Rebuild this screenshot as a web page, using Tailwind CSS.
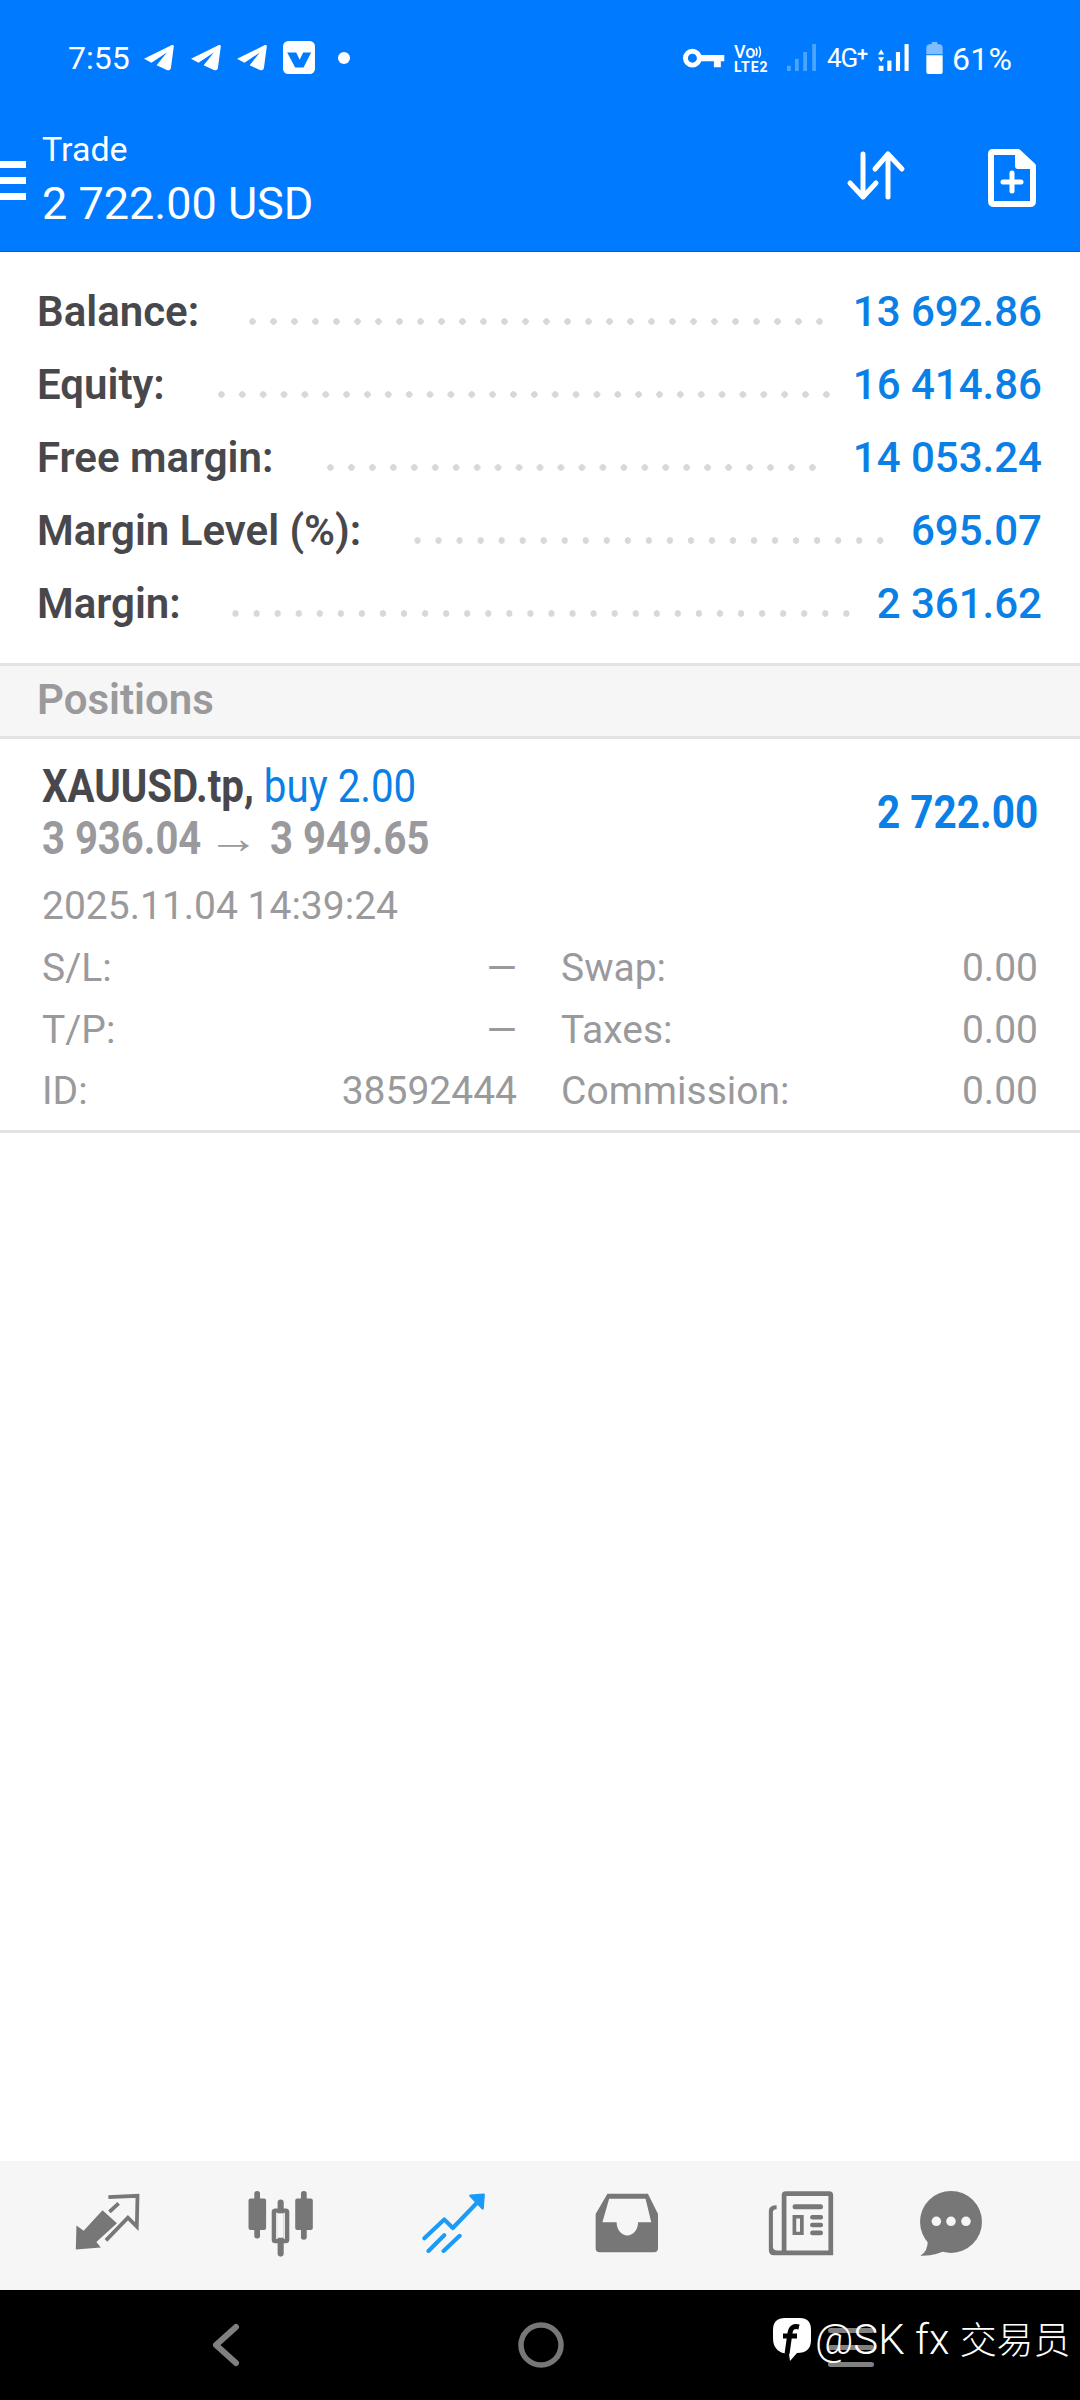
<!DOCTYPE html>
<html lang="en">
<head>
  <meta charset="UTF-8" />
  <title>Trade</title>
  <script src="https://cdn.jsdelivr.net/npm/@tailwindcss/browser@4"></script>
</head>
<body class="bg-white font-['Roboto',sans-serif]">
<div class="relative w-[1080px] h-[2400px] flex flex-col overflow-hidden">

  <!-- header -->
  <header class="h-[252px] shrink-0 bg-[#007aff] border-b border-[#0a5fb8] text-white">
    <!-- status bar -->
    <div class="h-[114px] flex items-center pl-[68px] pt-[1px]">
      <span class="text-[32px] leading-none w-[76px]">7:55</span>
      <svg class="w-[30px] h-[28px] mr-[17px]" viewBox="418 135 88 82" fill="#fff"><path d="M418 178 L500 138 Q507 136 505 145 L497 205 Q495 215 485 211 L455 197 L485 160 L440 190 Z"/></svg>
      <svg class="w-[30px] h-[28px] mr-[16px]" viewBox="418 135 88 82" fill="#fff"><path d="M418 178 L500 138 Q507 136 505 145 L497 205 Q495 215 485 211 L455 197 L485 160 L440 190 Z"/></svg>
      <svg class="w-[30px] h-[28px] mr-[16px]" viewBox="418 135 88 82" fill="#fff"><path d="M418 178 L500 138 Q507 136 505 145 L497 205 Q495 215 485 211 L455 197 L485 160 L440 190 Z"/></svg>
      <svg class="w-[32px] h-[33px] mr-[23px]" viewBox="820 125 92 95"><rect x="820" y="125" width="92" height="95" rx="15" fill="#fff"/><path d="M832 158 H858 L868 179 L878 158 H901 L879 201 H855 Z" fill="#007aff"/></svg>
      <span class="w-[12px] h-[12px] rounded-full bg-white"></span>

      <svg class="w-[43px] h-[20px] ml-[332px]" viewBox="413 143 124 57" fill="#fff"><circle cx="443" cy="172" r="20" fill="none" stroke="#fff" stroke-width="14"/><path d="M460 163 H535 V181 H525 V198 H505 V181 H460 Z"/></svg>
      <div class="w-[38px] ml-[9px] flex flex-col font-medium leading-none">
        <span class="text-[18px] h-[17px] flex items-center">Vo<svg class="w-[9px] h-[14px]" viewBox="0 0 9 14" fill="none" stroke="#fff" stroke-width="1.5"><path d="M1 3 Q3 7 1 11 M4 1.500 Q7 7 4 12.500"/></svg></span>
        <span class="text-[14px] h-[12px] font-bold tracking-[1px]">LTE2</span>
      </div>
      <svg class="w-[29px] h-[27px] ml-[15px]" viewBox="716 132 84 78" fill="#4aa5ff"><rect x="716" y="195" width="11" height="15"/><rect x="739" y="175" width="11" height="35"/><rect x="763" y="155" width="11" height="55"/><rect x="789" y="132" width="11" height="78"/></svg>
      <span class="text-[26px] leading-none tracking-[-1.2px] w-[51px] ml-[11px]">4G<span class="text-[20px] align-[6px] font-medium">+</span></span>
      <svg class="w-[31px] h-[27px]" viewBox="983 132 90 78" fill="#fff"><path d="M992 148 L1001 162 H983 Z M992 184 L1001 170 H983 Z"/><rect x="985" y="195" width="14" height="15"/><rect x="1010" y="180" width="12" height="30"/><rect x="1035" y="155" width="12" height="55"/><rect x="1060" y="132" width="12" height="78"/></svg>
      <svg class="w-[17px] h-[32px] ml-[17px]" viewBox="1120 124 48 94" fill="#fff"><path d="M1136 124 H1152 V130 Q1168 130 1168 140 V160 H1120 V140 Q1120 130 1136 130 Z" opacity=".5"/><path d="M1120 163 H1168 V212 Q1168 218 1162 218 H1126 Q1120 218 1120 212 Z"/></svg>
      <span class="text-[32px] leading-none ml-[9px] mt-[2px] tracking-[.3px]">61%</span>
    </div>

    <!-- toolbar -->
    <div class="relative h-[137px] pl-[42px] flex items-start">
      <div class="absolute left-0 top-[47px] w-[26px] flex flex-col gap-[9px]">
        <span class="h-[7px] bg-white"></span>
        <span class="h-[7px] bg-white"></span>
        <span class="h-[7px] bg-white"></span>
      </div>
      <div class="flex flex-col">
        <span class="text-[34px] leading-[40px] mt-[15px]">Trade</span>
        <span class="text-[45px] leading-[50px] mt-[10px]">2 722.00 USD</span>
      </div>
      <div class="ml-auto flex items-start pr-[44px] pt-[36px]">
        <svg class="w-[60px] h-[52px] mr-[82px]" viewBox="0 0 60 52" fill="none" stroke="#fff" stroke-width="5" stroke-linecap="round" stroke-linejoin="round"><path d="M17 4 V47 M4 33 L17 47 L30 33"/><path d="M42 4 V47 M29 19 L42 4 L56 19"/></svg>
        <svg class="w-[48px] h-[58px] -mt-[1px]" viewBox="0 0 48 58" fill="none" stroke="#fff" stroke-width="6" stroke-linejoin="round"><path d="M5 3 H30 L45 17 V52 Q45 55 42 55 H6 Q3 55 3 52 V5 Q3 3 5 3 Z"/><path d="M30 3 V17 H45" fill="#fff"/><path d="M24 24 V42 M15 33 H33" stroke-width="5" stroke-linecap="round"/></svg>
      </div>
    </div>
  </header>

  <!-- account summary -->
  <section class="pt-[23px] pb-[23px] pl-[37px] pr-[38px] text-[42px] leading-none font-medium">
    <div class="h-[73px] flex items-center">
      <span class="text-[#48484c] font-semibold">Balance:</span>
      <span class="flex-1 h-[7px] mt-[20px] ml-[43px] mr-[23px] bg-[radial-gradient(circle,#d8d8d8_3px,transparent_3.5px)] bg-[length:21px_7px] bg-repeat-round"></span>
      <span class="text-[#0a7fe6]">13 692.86</span>
    </div>
    <div class="h-[73px] flex items-center">
      <span class="text-[#48484c] font-semibold">Equity:</span>
      <span class="flex-1 h-[7px] mt-[20px] ml-[46px] mr-[16px] bg-[radial-gradient(circle,#d8d8d8_3px,transparent_3.5px)] bg-[length:21px_7px] bg-repeat-round"></span>
      <span class="text-[#0a7fe6]">16 414.86</span>
    </div>
    <div class="h-[73px] flex items-center">
      <span class="text-[#48484c] font-semibold">Free margin:</span>
      <span class="flex-1 h-[7px] mt-[20px] ml-[47px] mr-[30px] bg-[radial-gradient(circle,#d8d8d8_3px,transparent_3.5px)] bg-[length:21px_7px] bg-repeat-round"></span>
      <span class="text-[#0a7fe6]">14 053.24</span>
    </div>
    <div class="h-[73px] flex items-center">
      <span class="text-[#48484c] font-semibold">Margin Level (%):</span>
      <span class="flex-1 h-[7px] mt-[20px] ml-[46px] mr-[20px] bg-[radial-gradient(circle,#d8d8d8_3px,transparent_3.5px)] bg-[length:21px_7px] bg-repeat-round"></span>
      <span class="text-[#0a7fe6]">695.07</span>
    </div>
    <div class="h-[73px] flex items-center">
      <span class="text-[#48484c] font-semibold">Margin:</span>
      <span class="flex-1 h-[7px] mt-[20px] ml-[44px] mr-[20px] bg-[radial-gradient(circle,#d8d8d8_3px,transparent_3.5px)] bg-[length:21px_7px] bg-repeat-round"></span>
      <span class="text-[#0a7fe6]">2 361.62</span>
    </div>
  </section>

  <!-- positions header -->
  <div class="h-[76px] shrink-0 flex items-center pl-[37px] pb-[3px] bg-[#f6f6f6] border-y-[3px] border-[#e3e3e3] text-[42px] leading-none font-semibold text-[#9a9a9d]">Positions</div>

  <!-- position -->
  <div class="h-[394px] shrink-0 pl-[42px] pr-[42px] pt-[22px] border-b-[3px] border-[#e3e3e3]">
    <div class="flex items-center justify-between h-[104px] -mt-[1px]">
      <div class="flex flex-col">
        <div class="origin-left scale-x-[.875] text-[46px] leading-[52px] whitespace-nowrap"><span class="font-bold text-[#48484c]">XAUUSD.tp,</span> <span class="text-[#0a7fe6]">buy 2.00</span></div>
        <div class="origin-left scale-x-[.87] text-[46px] leading-[52px] font-bold text-[#9a9a9d] whitespace-nowrap flex items-center"><span>3 936.04</span><span class="font-normal text-[44px] leading-none ml-[15px] mr-[20px] scale-x-[1.35]">→</span><span>3 949.65</span></div>
      </div>
      <div class="origin-right scale-x-[.88] text-[46px] leading-none font-bold text-[#0a7fe6]">2 722.00</div>
    </div>
    <div class="h-[46px] mt-[19px] flex items-center text-[39px] leading-none text-[#9a9a9d]">2025.11.04 14:39:24</div>
    <div class="mt-[9px] text-[39px] leading-none text-[#9a9a9d]">
      <div class="h-[61.5px] flex items-center">
        <div class="w-[475px] flex justify-between"><span>S/L:</span><span>—</span></div>
        <div class="flex-1 ml-[44px] flex justify-between"><span>Swap:</span><span>0.00</span></div>
      </div>
      <div class="h-[61.5px] flex items-center">
        <div class="w-[475px] flex justify-between"><span>T/P:</span><span>—</span></div>
        <div class="flex-1 ml-[44px] flex justify-between"><span>Taxes:</span><span>0.00</span></div>
      </div>
      <div class="h-[61.5px] flex items-center">
        <div class="w-[475px] flex justify-between"><span>ID:</span><span>38592444</span></div>
        <div class="flex-1 ml-[44px] flex justify-between"><span>Commission:</span><span>0.00</span></div>
      </div>
    </div>
  </div>

  <div class="flex-1"></div>

  <!-- bottom tabs -->
  <nav class="h-[129px] shrink-0 bg-[#f6f6f6] flex items-center pl-[21px] pb-[5px]">
    <div class="w-[173px] flex justify-center">
      <svg class="w-[67px] h-[60px]" viewBox="215 140 195 175" fill="#777"><path d="M220 305 L222 235 L243 250 L298 190 L340 228 L280 283 L293 299 Z"/><path d="M315 152 L400 148 L398 238 L372 212 L308 278 M345 170 L318 195" fill="none" stroke="#777" stroke-width="11"/></svg>
    </div>
    <div class="w-[173px] flex justify-center">
      <svg class="w-[67px] h-[67px]" viewBox="715 125 195 198" fill="#777"><rect x="718" y="150" width="52" height="93" rx="6"/><rect x="735" y="128" width="17" height="140" rx="8"/><rect x="793" y="186" width="39" height="90" rx="4" fill="none" stroke="#777" stroke-width="13"/><rect x="804" y="153" width="18" height="169" rx="9" fill="#777"/><rect x="803" y="194" width="19" height="72" fill="#f6f6f6"/><rect x="856" y="150" width="52" height="93" rx="6"/><rect x="873" y="128" width="17" height="144" rx="8"/></svg>
    </div>
    <div class="w-[173px] flex justify-center">
      <svg class="w-[65px] h-[60px]" viewBox="1225 133 184 175" fill="none" stroke="#1a9bf5" stroke-width="12" stroke-linecap="round" stroke-linejoin="round"><path d="M1232 265 L1290 210 L1315 235 L1392 155"/><path d="M1244 302 L1290 256 M1288 302 L1335 258"/><path d="M1366 141 L1405 138 L1402 178 Z" fill="#1a9bf5" stroke-width="7"/></svg>
    </div>
    <div class="w-[173px] flex justify-center">
      <svg class="w-[64px] h-[60px]" viewBox="160 133 186 178" fill="#777"><path fill-rule="evenodd" d="M195 135 H315 L345 195 V297 Q345 309 333 309 H172 Q160 309 160 297 V195 Z M200 150 L180 220 H222 C224 272 284 272 286 220 H325 L308 150 Z"/></svg>
    </div>
    <div class="w-[173px] flex justify-center pl-[2px]">
      <svg class="w-[66px] h-[65px]" viewBox="663 126 194 192" fill="#777"><path fill-rule="evenodd" d="M715 127 H843 Q855 127 855 139 V316 H680 Q665 316 665 300 V185 Q665 168 688 168 V180 Q677 180 677 190 V290 Q677 302 690 302 H703 V139 Q703 127 715 127 Z M717 141 V302 H841 V141 Z"/><rect x="735" y="165" width="90" height="15" rx="7"/><path fill-rule="evenodd" d="M735 197 H768 V256 H735 Z M746 207 V246 H757 V207 Z"/><rect x="787" y="197" width="38" height="13" rx="6"/><rect x="787" y="220" width="38" height="13" rx="6"/><rect x="787" y="243" width="38" height="14" rx="7"/></svg>
    </div>
    <div class="w-[129px] flex justify-center">
      <svg class="w-[64px] h-[65px]" viewBox="1100 126 186 191" fill="#777"><circle cx="1193" cy="217" r="91"/><path d="M1125 270 Q1125 305 1103 316 Q1150 318 1185 295 Z"/><g fill="#f6f6f6"><circle cx="1150" cy="215" r="14"/><circle cx="1193" cy="215" r="14"/><circle cx="1237" cy="215" r="14"/></g></svg>
    </div>
  </nav>

  <!-- android nav bar -->
  <div class="relative h-[110px] shrink-0 bg-black flex items-start">
    <svg class="ml-[210px] mt-[33px] w-[32px] h-[44px]" viewBox="0 0 32 44" fill="none" stroke="#808080" stroke-width="6" stroke-linecap="round" stroke-linejoin="round"><path d="M26 4 L6 22 L26 40"/></svg>
    <svg class="ml-[276px] mt-[32px] w-[46px] h-[46px]" viewBox="0 0 46 46" fill="none" stroke="#777" stroke-width="5.500"><circle cx="23" cy="23" r="20"/></svg>
    <div class="ml-[264px] mt-[38px] w-[46px] flex flex-col gap-[12px]">
      <span class="h-[5px] rounded-full bg-[#808080]"></span>
      <span class="h-[5px] rounded-full bg-[#808080]"></span>
      <span class="h-[5px] rounded-full bg-[#808080]"></span>
    </div>
    <!-- watermark over the nav bar -->
    <div class="absolute left-[773px] top-[28px] flex items-center text-white text-[42px] leading-none font-['Roboto','Noto_Sans_CJK_SC',sans-serif] font-light whitespace-nowrap">
      <svg class="w-[38px] h-[43px] mr-[4px]" viewBox="0 0 38 43"><path d="M12 0 H27 Q38 0 38 12 V22 Q38 35 24 35 L17 43 L16 36 Q0 35 0 20 V12 Q0 0 12 0 Z" fill="#fff"/><path d="M26 9 Q18 7 17 15 L14 36 M10 18 H24" fill="none" stroke="#000" stroke-width="5"/></svg>
      <span>@SK fx <span class="text-[37px]">交易员</span></span>
    </div>
  </div>
</div>
</body>
</html>
